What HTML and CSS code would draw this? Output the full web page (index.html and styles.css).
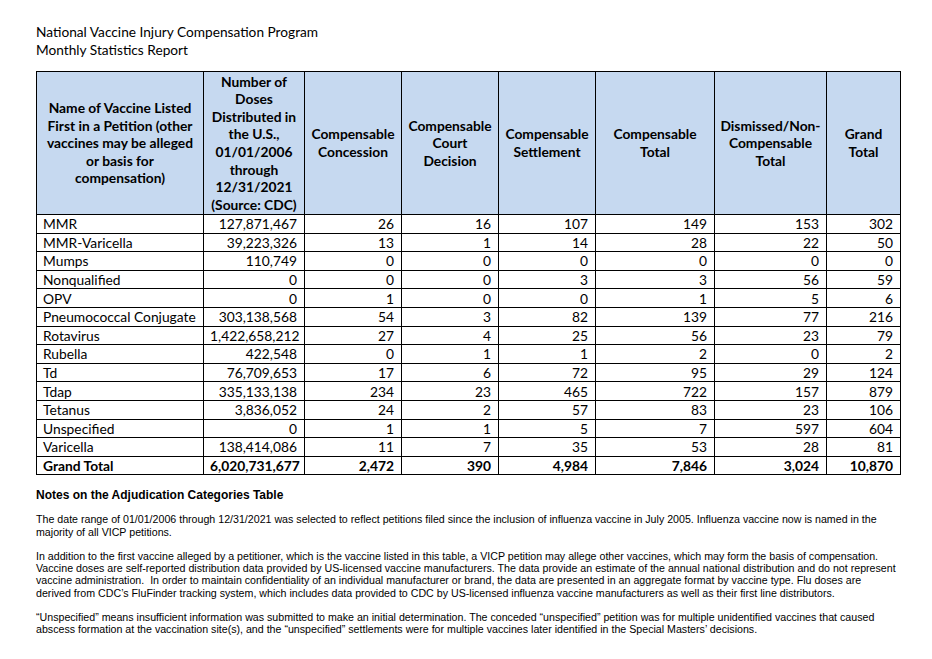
FILE: index.html
```html
<!DOCTYPE html>
<html lang="en">
<head>
<meta charset="utf-8">
<title>VICP Monthly Statistics Report</title>
<link rel="stylesheet" href="styles.css">
</head>
<body>
<div class="page">
  <header class="title">
    <div>National Vaccine Injury Compensation Program</div>
    <div>Monthly Statistics Report</div>
  </header>

  <table class="stats">
    <colgroup>
      <col class="c1"><col class="c2"><col class="c3"><col class="c4"><col class="c5"><col class="c6"><col class="c7"><col class="c8">
    </colgroup>
    <thead>
      <tr>
        <th>Name of Vaccine Listed First in a Petition (other vaccines may be alleged or basis for compensation)</th>
        <th>Number of Doses Distributed in the U.S., 01/01/2006 through 12/31/2021 (Source: CDC)</th>
        <th>Compensable Concession</th>
        <th>Compensable Court Decision</th>
        <th>Compensable Settlement</th>
        <th>Compensable Total</th>
        <th>Dismissed/Non-Compensable Total</th>
        <th>Grand Total</th>
      </tr>
    </thead>
    <tbody>
      <tr><td>MMR</td><td>127,871,467</td><td>26</td><td>16</td><td>107</td><td>149</td><td>153</td><td>302</td></tr>
      <tr><td>MMR-Varicella</td><td>39,223,326</td><td>13</td><td>1</td><td>14</td><td>28</td><td>22</td><td>50</td></tr>
      <tr><td>Mumps</td><td>110,749</td><td>0</td><td>0</td><td>0</td><td>0</td><td>0</td><td>0</td></tr>
      <tr><td>Nonqualified</td><td>0</td><td>0</td><td>0</td><td>3</td><td>3</td><td>56</td><td>59</td></tr>
      <tr><td>OPV</td><td>0</td><td>1</td><td>0</td><td>0</td><td>1</td><td>5</td><td>6</td></tr>
      <tr><td>Pneumococcal Conjugate</td><td>303,138,568</td><td>54</td><td>3</td><td>82</td><td>139</td><td>77</td><td>216</td></tr>
      <tr><td>Rotavirus</td><td>1,422,658,212</td><td>27</td><td>4</td><td>25</td><td>56</td><td>23</td><td>79</td></tr>
      <tr><td>Rubella</td><td>422,548</td><td>0</td><td>1</td><td>1</td><td>2</td><td>0</td><td>2</td></tr>
      <tr><td>Td</td><td>76,709,653</td><td>17</td><td>6</td><td>72</td><td>95</td><td>29</td><td>124</td></tr>
      <tr><td>Tdap</td><td>335,133,138</td><td>234</td><td>23</td><td>465</td><td>722</td><td>157</td><td>879</td></tr>
      <tr><td>Tetanus</td><td>3,836,052</td><td>24</td><td>2</td><td>57</td><td>83</td><td>23</td><td>106</td></tr>
      <tr><td>Unspecified</td><td>0</td><td>1</td><td>1</td><td>5</td><td>7</td><td>597</td><td>604</td></tr>
      <tr><td>Varicella</td><td>138,414,086</td><td>11</td><td>7</td><td>35</td><td>53</td><td>28</td><td>81</td></tr>
      <tr class="total"><td>Grand Total</td><td>6,020,731,677</td><td>2,472</td><td>390</td><td>4,984</td><td>7,846</td><td>3,024</td><td>10,870</td></tr>
    </tbody>
  </table>

  <section class="notes">
    <h2 class="notes-title">Notes on the Adjudication Categories Table</h2>
    <p>The date range of 01/01/2006 through 12/31/2021 was selected to reflect petitions filed since the inclusion of influenza vaccine in July 2005. Influenza vaccine now is named in the majority of all VICP petitions.</p>
    <p>In addition to the first vaccine alleged by a petitioner, which is the vaccine listed in this table, a VICP petition may allege other vaccines, which may form the basis of compensation. Vaccine doses are self-reported distribution data provided by US-licensed vaccine manufacturers. The data provide an estimate of the annual national distribution and do not represent vaccine administration.&nbsp; In order to maintain confidentiality of an individual manufacturer or brand, the data are presented in an aggregate format by vaccine type. Flu doses are<br>derived from CDC’s FluFinder tracking system, which includes data provided to CDC by US-licensed influenza vaccine manufacturers as well as their first line distributors.</p>
    <p>“Unspecified” means insufficient information was submitted to make an initial determination. The conceded “unspecified” petition was for multiple unidentified vaccines that caused abscess formation at the vaccination site(s), and the “unspecified” settlements were for multiple vaccines later identified in the Special Masters’ decisions.</p>
  </section>
</div>
</body>
</html>
```

FILE: styles.css
```css
html, body {
  margin: 0;
  padding: 0;
  background: #ffffff;
  color: #000000;
}

.page {
  padding: 23px 32px 0 36px;
  width: 864px;
}

.title {
  font-family: Lato, "Liberation Sans", sans-serif;
  font-size: 13.7px;
  line-height: 18px;
  margin-bottom: 12px;
}

.stats {
  border-collapse: collapse;
  table-layout: fixed;
  width: 864px;
  font-family: Lato, "Liberation Sans", sans-serif;
  font-size: 13.8px;
}

.c1 { width: 167px; }
.c2 { width: 101px; }
.c3 { width: 97px; }
.c4 { width: 97px; }
.c5 { width: 97px; }
.c6 { width: 119px; }
.c7 { width: 112px; }
.c8 { width: 74px; }

.stats th,
.stats td {
  border: 1px solid #000000;
}

.stats th {
  background: #c6d9f0;
  font-weight: bold;
  text-align: center;
  vertical-align: middle;
  line-height: 17.6px;
  height: 143px;
  padding: 0 4px;
  box-sizing: border-box;
}

.stats td {
  height: 18.6px;
  line-height: 17px;
  padding: 0 7px 0 6px;
  text-align: right;
  white-space: nowrap;
  box-sizing: border-box;
}

.stats td:first-child {
  text-align: left;
}

.stats .total td {
  font-weight: bold;
}

.notes {
  font-family: "Liberation Sans", Arial, sans-serif;
  font-size: 10.65px;
  line-height: 12.4px;
}

.notes-title {
  font-size: 12px;
  line-height: 14px;
  font-weight: bold;
  margin: 13px 0 11px 0;
}

.notes p {
  margin: 0 0 11.5px 0;
}
```
